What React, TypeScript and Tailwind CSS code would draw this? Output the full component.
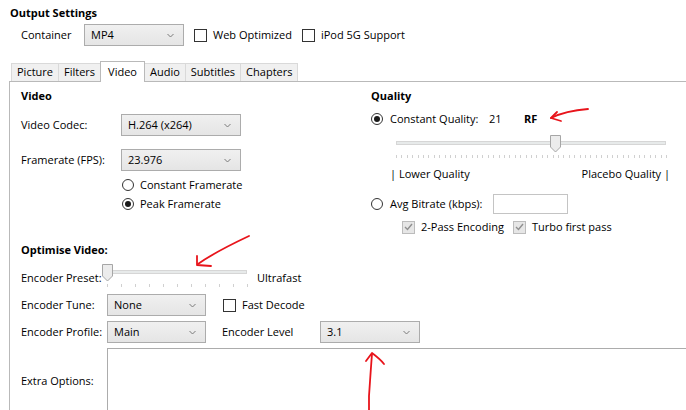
import React from "react";

const font = "font-['Open_Sans','Noto_Sans',sans-serif]";

function Chevron() {
  return (
    <svg width="7" height="5" viewBox="0 0 7 5" className="shrink-0">
      <path d="M0.5 1 L3.5 4 L6.5 1" fill="none" stroke="#7a7a7a" strokeWidth="1" />
    </svg>
  );
}

function Combo({ value, width }: { value: string; width: string }) {
  return (
    <div
      className={`${width} h-[22px] flex items-center justify-between pl-[6px] pr-[9px] border border-[#acacac] bg-gradient-to-b from-[#f0f0f0] to-[#e5e5e5]`}
    >
      <span>{value}</span>
      <Chevron />
    </div>
  );
}

function Check({ checked = false, disabled = false }: { checked?: boolean; disabled?: boolean }) {
  return (
    <div
      className={`w-[13px] h-[13px] border flex items-center justify-center ${
        disabled ? "border-[#bcbcbc] bg-[#e6e6e6]" : "border-[#333333] bg-white"
      }`}
    >
      {checked && (
        <svg width="9" height="8" viewBox="0 0 9 8">
          <path d="M1 4 L3.5 6.5 L8 1" fill="none" stroke={disabled ? "#8f8f8f" : "#222"} strokeWidth="1.4" />
        </svg>
      )}
    </div>
  );
}

function Radio({ checked = false }: { checked?: boolean }) {
  return (
    <div className="w-[12px] h-[12px] rounded-full border border-[#333333] bg-white flex items-center justify-center">
      {checked && <div className="w-[6px] h-[6px] rounded-full bg-[#1a1a1a]" />}
    </div>
  );
}

function Thumb() {
  return (
    <svg width="11" height="18" viewBox="0 0 11 18">
      <path d="M0.5 0.5 H10.5 V12 L5.5 17 L0.5 12 Z" fill="#ececec" stroke="#a6a6a6" />
    </svg>
  );
}

function Slider({ width, ticks, pos }: { width: number; ticks: number; pos: number }) {
  const trackW = width - 10;
  return (
    <div className="relative h-[24px]" style={{ width }}>
      <div className="absolute left-[5px] top-[7px] h-[4px] bg-[#e7eaea] border border-[#d6d6d6]" style={{ width: trackW }} />
      <div className="absolute top-[1px]" style={{ left: Math.round(pos * trackW) }}>
        <Thumb />
      </div>
      {Array.from({ length: ticks }).map((_, i) => (
        <div
          key={i}
          className="absolute top-[21px] w-px h-[3px] bg-[#d0d0d0]"
          style={{ left: 5 + Math.round((i * trackW) / (ticks - 1)) }}
        />
      ))}
    </div>
  );
}

const tabs = ["Picture", "Filters", "Video", "Audio", "Subtitles", "Chapters"];

export default function App() {
  return (
    <div className={`relative w-[686px] h-[410px] overflow-hidden bg-white text-[11px] text-black ${font}`}>
      {/* Output settings header */}
      <div className="pl-[10px] pt-[5px] h-[20px] font-bold">Output Settings</div>
      <div className="flex items-center pl-[21px] h-[22px] mt-[4px]">
        <span className="w-[63px]">Container</span>
        <Combo value="MP4" width="w-[100px]" />
        <div className="ml-[10px]"><Check /></div>
        <span className="ml-[6px]">Web Optimized</span>
        <div className="ml-[10px]"><Check /></div>
        <span className="ml-[6px]">iPod 5G Support</span>
      </div>

      {/* Tab strip */}
      <div className="flex items-end pl-[11px] mt-[15px] h-[20px]">
        {tabs.map((t) => (
          <div
            key={t}
            className={
              t === "Video"
                ? "relative z-10 -mb-px h-[21px] -ml-px px-[7px] flex items-center bg-white border border-b-0 border-[#b9b9b9]"
                : "h-[18px] -ml-px first:ml-0 px-[5px] flex items-center bg-[#f0f0f0] border border-b-0 border-[#d9d9d9]"
            }
          >
            {t}
          </div>
        ))}
      </div>

      {/* Tab page */}
      <div className="ml-[9px] w-[700px] h-[340px] border-t border-l border-[#b9b9b9]">
        <div className="flex h-[160px]">
          {/* Video column */}
          <div className="w-[350px] pl-[11px]">
            <div className="h-[16px] mt-[6px] font-bold flex items-center">Video</div>
            <div className="flex items-center h-[22px] mt-[10px]">
              <span className="w-[100px]">Video Codec:</span>
              <Combo value="H.264 (x264)" width="w-[120px]" />
            </div>
            <div className="flex items-center h-[22px] mt-[13px]">
              <span className="w-[100px]">Framerate (FPS):</span>
              <Combo value="23.976" width="w-[120px]" />
            </div>
            <div className="flex items-center h-[14px] mt-[7px] pl-[101px] gap-[6px]">
              <Radio />
              <span>Constant Framerate</span>
            </div>
            <div className="flex items-center h-[14px] mt-[5px] pl-[101px] gap-[6px]">
              <Radio checked />
              <span>Peak Framerate</span>
            </div>
          </div>

          {/* Quality column */}
          <div className="pl-[11px]">
            <div className="h-[16px] mt-[6px] font-bold flex items-center">Quality</div>
            <div className="flex items-center h-[14px] mt-[8px]">
              <Radio checked />
              <span className="ml-[7px] w-[99px]">Constant Quality:</span>
              <span className="w-[35px]">21</span>
              <span className="font-bold">RF</span>
            </div>
            <div className="mt-[8px] ml-[20px]">
              <Slider width={280} ticks={51} pos={0.588} />
            </div>
            <div className="flex items-center justify-between h-[14px] mt-[9px] ml-[19px] w-[280px]">
              <span>| Lower Quality</span>
              <span>Placebo Quality |</span>
            </div>
            <div className="flex items-center h-[20px] mt-[13px]">
              <Radio />
              <span className="ml-[7px] w-[103px]">Avg Bitrate (kbps):</span>
              <div className="w-[75px] h-[20px] border border-[#c4c4c4] bg-white" />
            </div>
            <div className="flex items-center h-[14px] mt-[6px] ml-[31px]">
              <Check checked disabled />
              <span className="ml-[6px]">2-Pass Encoding</span>
              <div className="ml-[9px]"><Check checked disabled /></div>
              <span className="ml-[6px]">Turbo first pass</span>
            </div>
          </div>
        </div>

        {/* Encoder options */}
        <div className="pl-[11px]">
          <div className="h-[16px] font-bold flex items-center">Optimise Video:</div>
          <div className="flex items-start h-[24px] mt-[5px]">
            <span className="w-[81px] mt-[7px]">Encoder Preset:</span>
            <Slider width={150} ticks={11} pos={0} />
            <span className="ml-[5px] mt-[7px]">Ultrafast</span>
          </div>
          <div className="flex items-center h-[22px] mt-[7px]">
            <span className="w-[86px]">Encoder Tune:</span>
            <Combo value="None" width="w-[99px]" />
            <div className="ml-[17px]"><Check /></div>
            <span className="ml-[6px]">Fast Decode</span>
          </div>
          <div className="flex items-center h-[22px] mt-[5px]">
            <span className="w-[86px]">Encoder Profile:</span>
            <Combo value="Main" width="w-[99px]" />
            <span className="ml-[16px] w-[98px]">Encoder Level</span>
            <Combo value="3.1" width="w-[100px]" />
          </div>
          <div className="flex mt-[5px]">
            <span className="w-[86px] mt-[25px]">Extra Options:</span>
            <div className="w-[600px] h-[80px] border border-[#acacac] bg-white" />
          </div>
        </div>
      </div>

      {/* Red hand-drawn annotation arrows */}
      <svg className="absolute inset-0 pointer-events-none" width="686" height="410">
        <g fill="none" stroke="#e8141b" strokeWidth="1.8" strokeLinecap="round" strokeLinejoin="round">
          <path d="M588 109 C575 110 561 113 551 118" />
          <path d="M557 112 L551 118 L561 121" />
          <path d="M249 236 C232 244 212 254 198 264" />
          <path d="M197 256 L197 265 L211 266" />
          <path d="M369 410 L369 396 C370 382 371 366 372 354" />
          <path d="M366 361 L372 353 C376 356 381 360 384 364" />
        </g>
      </svg>
    </div>
  );
}
